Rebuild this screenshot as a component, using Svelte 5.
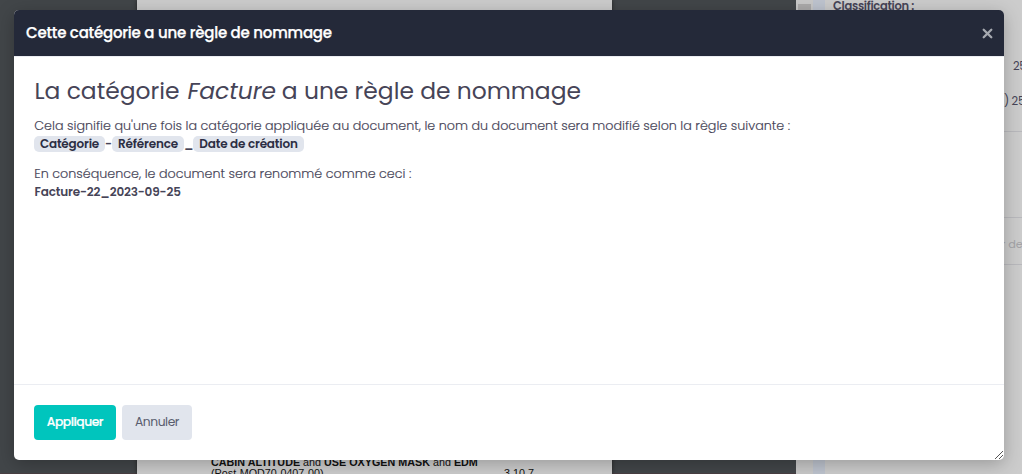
<script>
  const tokens = [
    { label: 'Catégorie', width: 71 },
    { label: 'Référence', width: 72 },
    { label: 'Date de création', width: 111 }
  ];
  const separators = ['-', '_'];
</script>

<div class="screen">
  <main class="workspace">
    <div class="viewer">
      <div class="sheet">
        <div class="line"><b>CABIN ALTITUDE <i>and</i> USE OXYGEN MASK <i>and</i> EDM</b></div>
        <div class="line second"><span>(Post-MOD70-0407-00)</span><span>3.10.7</span></div>
      </div>
    </div>
    <div class="scrollbar"><div class="thumb"></div></div>
    <div class="splitter"></div>
    <aside class="details">
      <div class="classification">Classification :</div>
      <div class="value first">25</div>
      <div class="value next">0) 25</div>
      <div class="field">r de</div>
    </aside>
  </main>

  <section class="modal" role="dialog" aria-labelledby="dialog-title">
    <header>
      <div class="title" id="dialog-title">Cette catégorie a une règle de nommage</div>
      <svg class="close" width="11" height="11" viewBox="0 0 11 11"><path d="M1.7 1.7 9.3 9.3M9.3 1.7 1.7 9.3" /></svg>
    </header>
    <div class="content">
      <h1>La catégorie <em>Facture</em> a une règle de nommage</h1>
      <p class="intro">Cela signifie qu'une fois la catégorie appliquée au document, le nom du document sera modifié selon la règle suivante :</p>
      <div class="rule">
        {#each tokens as token, i}
          <span class="token" style:width="{token.width}px">{token.label}</span>{#if i < 2}<span class="sep">{separators[i]}</span>{/if}
        {/each}
      </div>
      <p class="result">En conséquence, le document sera renommé comme ceci :</p>
      <div class="filename">Facture-22_2023-09-25</div>
    </div>
    <footer>
      <button class="apply">Appliquer</button>
      <button class="cancel">Annuler</button>
      <svg class="grip" width="10" height="10" viewBox="0 0 10 10"><path d="M1 9 9 1M5 9 9 5" /></svg>
    </footer>
  </section>
</div>

<style>
  :global(body) { overflow: hidden; }
  .screen {
    position: relative;
    width: 1022px;
    height: 474px;
    overflow: hidden;
    font-family: Poppins, Inter, "Open Sans", sans-serif;
    color: #464457;
  }
  .workspace { display: flex; height: 474px; background: #cccccc; }
  .viewer { box-sizing: border-box; width: 796px; padding-left: 137px; background: #424649; border-bottom: 1px solid #493f43; }
  .sheet {
    box-sizing: border-box;
    width: 475px;
    height: 474px;
    padding-top: 456px;
    background: #cccccc;
    box-shadow: 0 0 4px #222;
    font: 10.78px/12px "Liberation Sans", sans-serif;
    color: #111;
    white-space: nowrap;
  }
  .line { padding-left: 74px; height: 11px; }
  .line i { font-style: normal; font-weight: 400; }
  .second { display: flex; width: 323px; justify-content: space-between; }
  .scrollbar { width: 17px; padding-top: 4px; box-sizing: border-box; background: #c9c9c9; }
  .thumb { width: 13px; height: 100px; margin-left: 2px; background: #acabab; }
  .splitter { width: 12px; background: #bec4cf; }
  .details { width: 197px; overflow: hidden; background: #cccccc; white-space: nowrap; }
  .classification { height: 14px; padding-left: 8px; line-height: 13px; font-size: 11.5px; font-weight: 600; letter-spacing: -.3px; }
  .value { height: 16px; line-height: 17px; font-size: 11.5px; letter-spacing: -.3px; }
  .first { margin-top: 44px; padding-left: 188px; }
  .next { margin-top: 19px; padding-left: 172px; }
  .details .next { height: 38px; border-bottom: 1px solid #b9b9bd; }
  .field { height: 46px; margin-top: 85px; padding-left: 176px; border: solid #b9b9bd; border-width: 1px 0; line-height: 52px; color: #a4a4a8; font-size: 11.3px; }

  .modal {
    position: absolute;
    left: 14px;
    top: 10px;
    display: flex;
    flex-direction: column;
    width: 990px;
    height: 450px;
    overflow: hidden;
    border-radius: 5px;
    background: #fff;
    box-shadow: 0 4px 18px rgba(0, 0, 0, .25);
  }
  header {
    display: flex;
    box-sizing: border-box;
    height: 47px;
    padding: 0 11px 0 12px;
    align-items: center;
    justify-content: space-between;
    background: #242939;
    border-bottom: 1px solid #ebedf2;
  }
  .title { padding-bottom: 2px; color: #fff; font-size: 15px; font-weight: 500; letter-spacing: -.22px; white-space: nowrap; -webkit-text-stroke: .25px #fff; }
  .close { fill: none; stroke: #a6a9b0; stroke-width: 2.3; stroke-linecap: round; }
  .content { flex: 1; padding: 18px 20px 0; white-space: nowrap; }
  h1 { margin: 0; height: 32px; line-height: 32px; font-size: 23.4px; font-weight: 400; padding-left: .5px; }
  em { margin: 0 -.3px 0 1.7px; }
  p { margin: 0; height: 18px; font-size: 12.73px; line-height: 18px; font-weight: 300; padding-left: .3px; -webkit-text-stroke: .15px #464457; }
  .intro { margin-top: 10px; }
  .rule { display: flex; height: 18px; align-items: center; font-size: 12px; font-weight: 600; }
  .token { height: 16px; line-height: 16px; text-align: center; border-radius: 5px; background: #e1e5ed; color: #2c2e43; letter-spacing: -.18px; }
  .sep { width: 7px; text-align: center; }
  .sep:nth-of-type(4) { width: 9px; }
  .result { margin-top: 12px; }
  .filename { height: 18px; padding-left: .5px; line-height: 18px; font-size: 12px; font-weight: 600; letter-spacing: -.15px; }
  footer {
    position: relative;
    display: flex;
    box-sizing: border-box;
    height: 76px;
    padding: 20px;
    gap: 6px;
    border-top: 1px solid #ebedf2;
  }
  button { height: 35px; padding: 0 0 1px; border: 0; border-radius: 4px; font-family: inherit; font-size: 12.3px; letter-spacing: -.45px; }
  .apply { width: 82px; background: #00c5bd; color: #fff; font-weight: 500; -webkit-text-stroke: .2px #fff; }
  .cancel { width: 70px; background: #e1e5ed; color: #595d6e; font-weight: 400; }
  .grip { position: absolute; right: 0; bottom: 0; fill: none; stroke: #555; stroke-width: 1; }
</style>
